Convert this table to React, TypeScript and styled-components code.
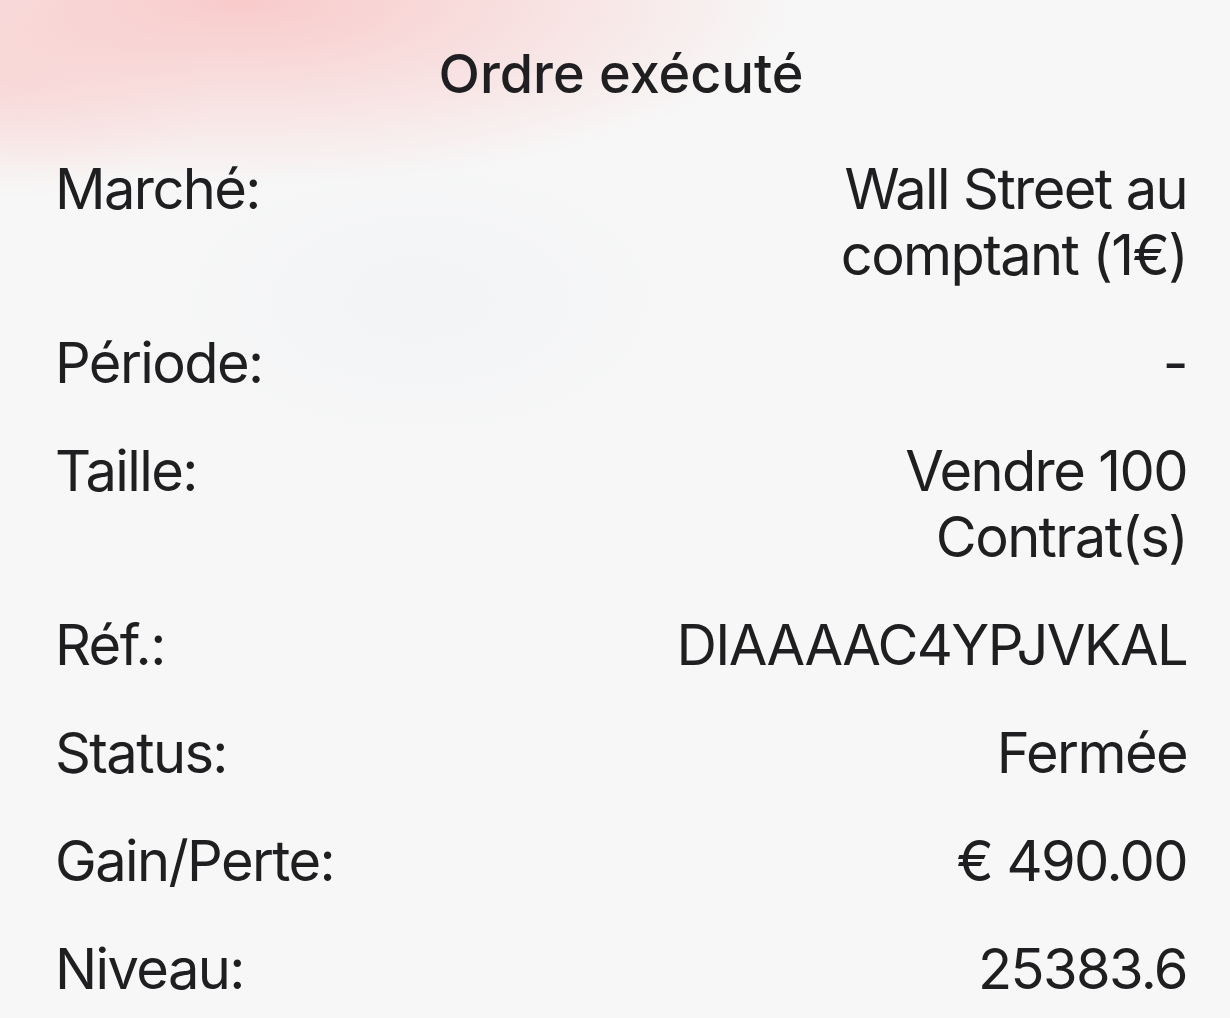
import React from "react";
import styled, { createGlobalStyle } from "styled-components";

type Detail = {
  label: string;
  value: string[];
};

const details: Detail[] = [
  { label: "Marché:", value: ["Wall Street au", "comptant (1€)"] },
  { label: "Période:", value: ["-"] },
  { label: "Taille:", value: ["Vendre 100", "Contrat(s)"] },
  { label: "Réf.:", value: ["DIAAAAC4YPJVKAL"] },
  { label: "Status:", value: ["Fermée"] },
  { label: "Gain/Perte:", value: ["€ 490.00"] },
  { label: "Niveau:", value: ["25383.6"] },
];

const GlobalStyle = createGlobalStyle`
  html, body {
    margin: 0;
    padding: 0;
  }
  body {
    font-family: Inter, "Noto Sans", "Liberation Sans", sans-serif;
    color: #1f1f21;
    background: #f7f7f7;
  }
`;

const Sheet = styled.div`
  min-height: 1018px;
  box-sizing: border-box;
  padding: 41px 43px 0 55px;
  background:
    radial-gradient(ellipse 560px 185px at 240px 0px, rgba(249, 200, 200, 0.95), rgba(249, 208, 208, 0.6) 50%, rgba(247, 247, 247, 0) 100%),
    radial-gradient(ellipse 220px 120px at 0px 80px, rgba(249, 205, 205, 0.6), rgba(247, 247, 247, 0) 100%),
    radial-gradient(ellipse 320px 180px at 420px 300px, rgba(238, 240, 245, 0.45), rgba(247, 247, 247, 0) 100%),
    #f7f7f7;
  overflow: hidden;
`;

const Title = styled.h1`
  margin: 0 0 49px;
  font-size: 54px;
  font-weight: 500;
  line-height: 66px;
  text-align: center;
  letter-spacing: 0;
`;

const List = styled.div`
  display: flex;
  flex-direction: column;
  gap: 42px;
`;

const Row = styled.div`
  display: flex;
  justify-content: space-between;
  align-items: flex-start;
  font-size: 56px;
  line-height: 66px;
  letter-spacing: -1.6px;
`;

const Label = styled.span`
  white-space: nowrap;
`;

const Value = styled.span`
  text-align: right;
  white-space: nowrap;
`;

const Line = styled.div``;

export default function App() {
  return (
    <>
      <GlobalStyle />
      <Sheet>
        <Title>Ordre exécuté</Title>
        <List>
          {details.map(d => (
            <Row key={d.label}>
              <Label>{d.label}</Label>
              <Value>
                {d.value.map(l => (
                  <Line key={l}>{l}</Line>
                ))}
              </Value>
            </Row>
          ))}
        </List>
      </Sheet>
    </>
  );
}
